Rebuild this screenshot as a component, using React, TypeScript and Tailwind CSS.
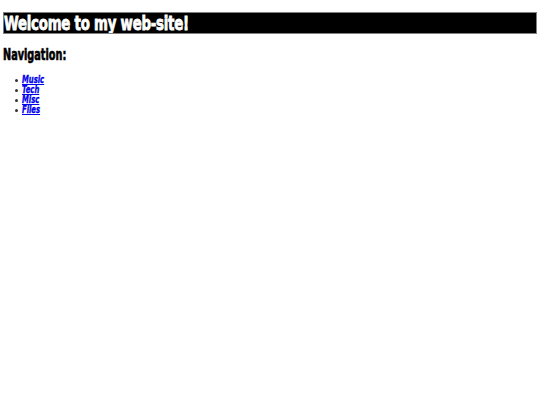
export default function App() {
  const links = ['Music', 'Tech', 'Misc', 'Files']
  return (
    <div className="min-h-[405px] bg-white px-[3px] pt-[12px] font-['DejaVu_Sans_Condensed',sans-serif] text-black">
      <h1 className="overflow-hidden whitespace-nowrap border border-[#808080] bg-black text-[20px] font-bold leading-[20px] text-white">
        <span className="inline-block origin-left scale-x-[0.74] tracking-[-0.3px] [-webkit-text-stroke:0.8px_white]">
          Welcome to my web-site!
        </span>
      </h1>
      <h2 className="mt-[13px] whitespace-nowrap text-[15px] font-bold leading-[16px]">
        <span className="inline-block origin-left scale-x-[0.72] [-webkit-text-stroke:0.6px_black]">Navigation:</span>
      </h2>
      <ul className="mt-[12px] pl-[12px] text-[10px] leading-[10px]">
        {links.map((l) => (
          <li key={l} className="flex items-center">
            <span className="mr-[4px] mt-[1px] h-[3px] w-[3px] rounded-full bg-[#333]" />
            <a
              href="#"
              className="inline-block origin-left scale-x-[0.76] font-bold italic text-[#0000ee] underline [-webkit-text-stroke:0.3px_#0000ee]"
            >
              {l}
            </a>
          </li>
        ))}
      </ul>
    </div>
  )
}
